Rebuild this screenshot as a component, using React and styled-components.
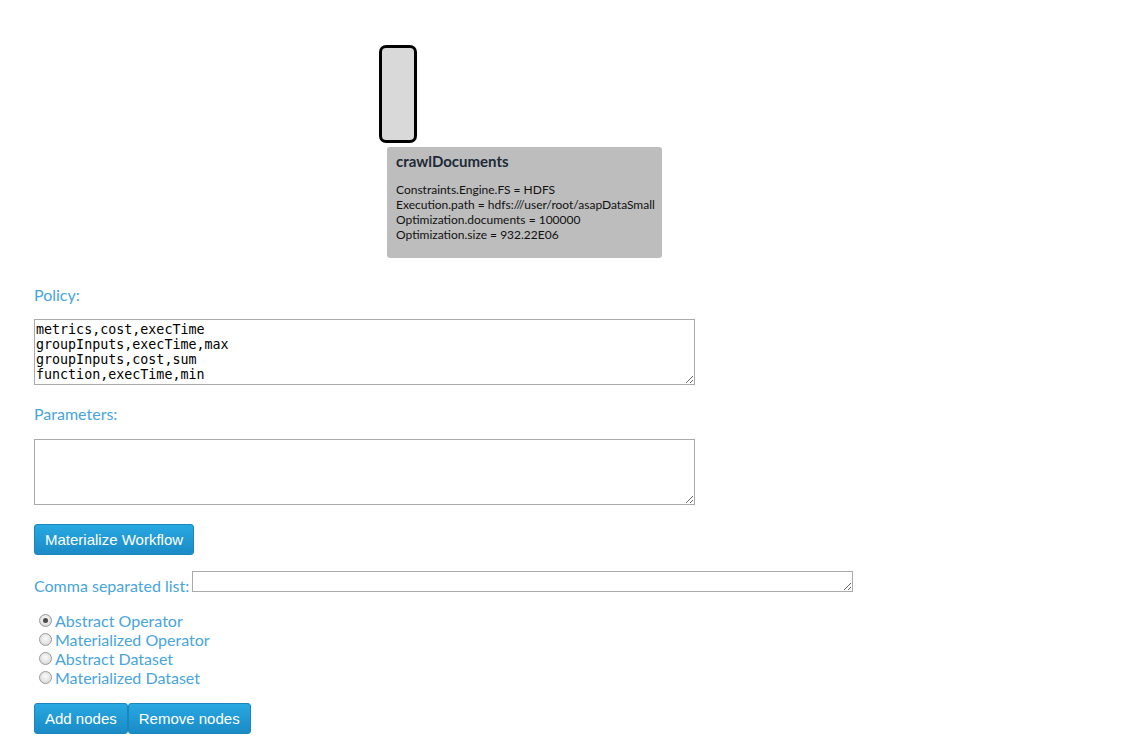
import React, { useState } from "react";
import styled, { createGlobalStyle } from "styled-components";

const GlobalStyle = createGlobalStyle`
  body {
    margin: 0;
    background: #ffffff;
    font-family: Lato, "Open Sans", sans-serif;
  }
`;

const Page = styled.div`
  padding: 0 34px 14px 34px;
`;

// free canvas holding the workflow graph
const Canvas = styled.div`
  position: relative;
  height: 285px;
`;

const GraphNode = styled.div`
  position: absolute;
  left: ${(p) => p.x}px;
  top: ${(p) => p.y}px;
  width: 32px;
  height: 92px;
  border: 3px solid #000;
  border-radius: 7px;
  background: #d9d9d9;
`;

const Tooltip = styled.div`
  position: absolute;
  left: ${(p) => p.x}px;
  top: ${(p) => p.y}px;
  width: 275px;
  height: 111px;
  box-sizing: border-box;
  padding: 5px 9px;
  background: #bdbdbd;
  border-radius: 3px;
  color: #111;
  white-space: nowrap;
`;

const TooltipTitle = styled.div`
  font-weight: bold;
  font-size: 15px;
  line-height: 18px;
  color: #1d2a38;
  margin-bottom: 12px;
`;

const TooltipLine = styled.div`
  font-size: 12px;
  line-height: 15px;
`;

const FieldLabel = styled.label`
  display: block;
  color: #48a5dd;
  font-size: 16px;
  line-height: 20px;
  margin-top: ${(p) => p.top || 0}px;
  margin-bottom: ${(p) => p.bottom || 14}px;
`;

const Area = styled.textarea`
  display: block;
  box-sizing: border-box;
  width: 661px;
  height: 66px;
  margin: 0;
  padding: 2px 1px;
  border: 1px solid #aaa;
  font-family: "DejaVu Sans Mono", monospace;
  font-size: 13.333px;
  line-height: 15px;
  color: #000;
  resize: both;
`;

const Button = styled.button`
  height: 31px;
  padding: 0 10px;
  border: 1px solid #1a86bd;
  border-radius: 3px;
  background: linear-gradient(#28a8e2, #1a8bc6);
  color: #fff;
  font-family: "Liberation Sans", Arial, sans-serif;
  font-size: 15px;
  white-space: nowrap;
  cursor: pointer;
`;

const WorkflowButton = styled(Button)`
  display: block;
  margin-top: 19px;
`;

const ListRow = styled.div`
  margin-top: 16px;
  display: flex;
  align-items: flex-end;
  gap: 3px;
`;

const InlineLabel = styled.label`
  color: #48a5dd;
  font-size: 16px;
  line-height: 20px;
  margin-bottom: -4px;
`;

const ListInput = styled.textarea`
  box-sizing: border-box;
  width: 661px;
  height: 21px;
  margin: 0;
  padding: 1px;
  border: 1px solid #aaa;
  font-family: "DejaVu Sans Mono", monospace;
  font-size: 13.333px;
  resize: both;
`;

const RadioList = styled.div`
  margin-top: 19px;
  display: flex;
  flex-direction: column;
`;

const RadioRow = styled.label`
  display: flex;
  align-items: center;
  height: 19px;
  color: #48a5dd;
  font-size: 16px;
  cursor: pointer;
`;

const Radio = styled.input`
  appearance: none;
  width: 13px;
  height: 13px;
  margin: 0 3px 0 5px;
  border-radius: 50%;
  border: 1px solid #9a9a9a;
  background: radial-gradient(circle at 50% 40%, #fafafa, #d3d3d3);
  box-sizing: border-box;
  position: relative;
  &:checked::after {
    content: "";
    position: absolute;
    left: 3px;
    top: 3px;
    width: 5px;
    height: 5px;
    border-radius: 50%;
    background: #4a4a4a;
  }
`;

const ButtonRow = styled.div`
  margin-top: 16px;
  display: flex;
`;

const tooltipLines = [
  "Constraints.Engine.FS = HDFS",
  "Execution.path = hdfs:///user/root/asapDataSmall",
  "Optimization.documents = 100000",
  "Optimization.size = 932.22E06",
];

const nodeTypes = [
  "Abstract Operator",
  "Materialized Operator",
  "Abstract Dataset",
  "Materialized Dataset",
];

export default function App() {
  const [kind, setKind] = useState(nodeTypes[0]);

  return (
    <>
      <GlobalStyle />
      <Page>
        <Canvas>
          <GraphNode x={345} y={45} />
          <Tooltip x={353} y={147}>
            <TooltipTitle>crawlDocuments</TooltipTitle>
            {tooltipLines.map((line) => (
              <TooltipLine key={line}>{line}</TooltipLine>
            ))}
          </Tooltip>
        </Canvas>

        <FieldLabel>Policy:</FieldLabel>
        <Area
          defaultValue={
            "metrics,cost,execTime\ngroupInputs,execTime,max\ngroupInputs,cost,sum\nfunction,execTime,min"
          }
        />

        <FieldLabel top={19} bottom={15}>
          Parameters:
        </FieldLabel>
        <Area />

        <WorkflowButton>Materialize Workflow</WorkflowButton>

        <ListRow>
          <InlineLabel>Comma separated list:</InlineLabel>
          <ListInput />
        </ListRow>

        <RadioList>
          {nodeTypes.map((t) => (
            <RadioRow key={t}>
              <Radio
                type="radio"
                name="kind"
                checked={kind === t}
                onChange={() => setKind(t)}
              />
              {t}
            </RadioRow>
          ))}
        </RadioList>

        <ButtonRow>
          <Button>Add nodes</Button>
          <Button>Remove nodes</Button>
        </ButtonRow>
      </Page>
    </>
  );
}
